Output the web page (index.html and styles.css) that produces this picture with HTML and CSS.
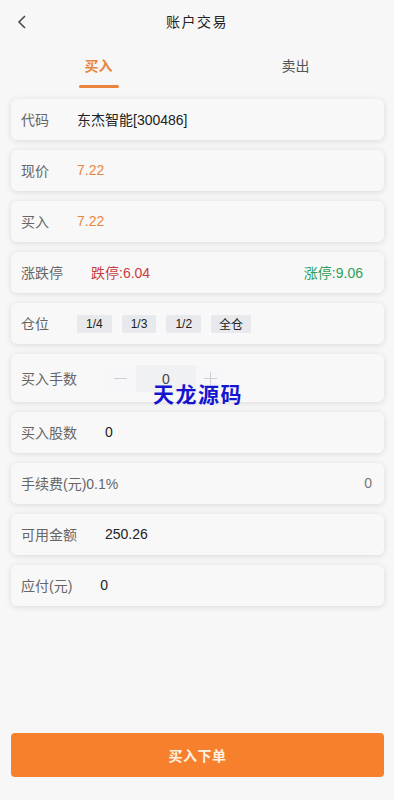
FILE: index.html
```html
<!DOCTYPE html>
<html lang="zh">
<head>
<meta charset="utf-8">
<link rel="stylesheet" href="styles.css">
</head>
<body>
<div class="page">
  <div class="header">
    <svg class="back" width="10" height="14" viewBox="0 0 10 14"><path d="M8 1 L2 7 L8 13" fill="none" stroke="#444" stroke-width="1.5"/></svg>
    <div class="title">账户交易</div>
  </div>
  <div class="tabs">
    <div class="tab active">买入<span class="bar"></span></div>
    <div class="tab">卖出</div>
  </div>
  <div class="list">
    <div class="card"><span class="label">代码</span><span class="val dark">东杰智能[300486]</span></div>
    <div class="card"><span class="label">现价</span><span class="val orange">7.22</span></div>
    <div class="card"><span class="label">买入</span><span class="val orange">7.22</span></div>
    <div class="card"><span class="label">涨跌停</span><span class="val red">跌停:6.04</span><span class="right green">涨停:9.06</span></div>
    <div class="card"><span class="label">仓位</span>
      <div class="chips"><span class="chip">1/4</span><span class="chip">1/3</span><span class="chip">1/2</span><span class="chip">全仓</span></div>
    </div>
    <div class="card tall"><span class="label">买入手数</span>
      <div class="stepper"><span class="sbtn"><i class="h"></i></span><span class="sinput">0</span><span class="sbtn"><i class="h"></i><i class="v"></i></span></div>
    </div>
    <div class="card"><span class="label">买入股数</span><span class="val dark">0</span></div>
    <div class="card"><span class="label">手续费(元)0.1%</span><span class="right grey">0</span></div>
    <div class="card"><span class="label">可用金额</span><span class="val dark">250.26</span></div>
    <div class="card"><span class="label">应付(元)</span><span class="val dark">0</span></div>
  </div>
  <div class="spacer"></div>
  <div class="submit">买入下单</div>
  <div class="watermark">天龙源码</div>
</div>
</body>
</html>
```
FILE: styles.css
```css
* { box-sizing: border-box; }
html, body { margin: 0; padding: 0; }
body {
  background: #f7f7f7;
  font-family: "Liberation Sans", "Noto Sans CJK SC", sans-serif;
  color: #333;
  width: 394px;
  height: 800px;
  overflow: hidden;
}
.page { position: relative; height: 800px; display: flex; flex-direction: column; }
.header { height: 42px; position: relative; display: flex; align-items: center; justify-content: center; }
.back { position: absolute; left: 17px; top: 15px; }
.title { font-size: 14px; color: #222; letter-spacing: 1.5px; }
.tabs { height: 48px; display: flex; }
.tab { flex: 1; display: flex; justify-content: center; align-items: center; font-size: 14px; color: #555; position: relative; padding-bottom: 2px; }
.tab.active { color: #e8853f; font-weight: bold; }
.bar { position: absolute; left: 50%; bottom: 2px; width: 40px; margin-left: -20px; height: 3px; border-radius: 2px; background: #e8853f; }
.list { padding: 9px 10px 0 11px; display: flex; flex-direction: column; gap: 10px; }
.card { height: 41px; background: #f8f8f9; border-radius: 6px; box-shadow: 0 1px 6px rgba(0,0,0,0.12); display: flex; align-items: center; gap: 28px; padding: 0 12px 2px 10px; font-size: 14px; }
.card.tall { height: 48px; padding-bottom: 0; }
.label { color: #666; white-space: nowrap; }
.dark { color: #222; }
.orange { color: #e8853f; }
.red { color: #cc3b3b; }
.green { color: #2e9d55; margin-right: 9px; }
.grey { color: #777; }
.right { margin-left: auto; }
.chips { display: flex; gap: 10px; margin-top: 2px; }
.chip { height: 18px; background: #e8e9ec; border-radius: 2px; font-size: 12px; color: #222; display: flex; align-items: center; justify-content: center; padding: 0 9px; }
.chip:nth-child(4) { padding: 0 8px; }
.stepper { display: flex; height: 27px; margin-left: 1px; margin-top: 1px; }
.sbtn { width: 30px; position: relative; background: #f7f7f9; }
.sbtn .h { position: absolute; left: 8px; top: 13px; width: 13px; height: 1px; background: #cfcfd3; }
.sbtn .v { position: absolute; left: 14px; top: 7px; width: 1px; height: 13px; background: #cfcfd3; }
.sinput { width: 60px; background: #f0f1f3; color: #444; font-size: 14px; display: flex; align-items: center; justify-content: center; }
.spacer { flex: 1; }
.submit { margin: 0 10px 23px 11px; height: 44px; background: #f7802c; border-radius: 4px; color: #fff3e6; font-size: 14px; font-weight: bold; display: flex; align-items: center; justify-content: center; letter-spacing: 0.5px; }
.watermark { position: absolute; left: 153px; top: 378px; font-size: 21px; font-weight: bold; color: #1515d0; letter-spacing: 1.5px; }
```
